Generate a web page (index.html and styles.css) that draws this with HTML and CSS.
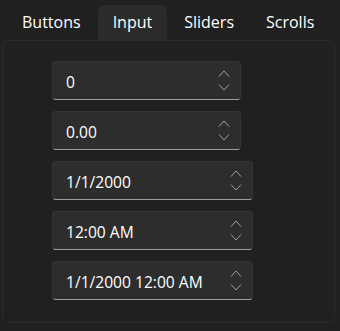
FILE: index.html
```html
<!DOCTYPE html>
<html lang="en">
<head>
    <meta charset="UTF-8">
    <meta name="viewport" content="width=device-width, initial-scale=1.0">
    <title>Input</title>
    <link rel="stylesheet" href="styles.css">
</head>
<body>
    <!-- Tab strip -->
    <div class="tabs">
        <div class="tab">Buttons</div>
        <div class="tab selected">Input</div>
        <div class="tab">Sliders</div>
        <div class="tab">Scrolls</div>
    </div>

    <!-- Input page -->
    <div class="panel">
        <div class="spin">
            <span class="value">0</span>
            <svg class="arrows" width="12" height="23" viewBox="0 0 12 23"><path d="M1 7.5 L6 2 L11 7.5 M1 15.5 L6 21 L11 15.5"/></svg>
        </div>
        <div class="spin">
            <span class="value">0.00</span>
            <svg class="arrows" width="12" height="23" viewBox="0 0 12 23"><path d="M1 7.5 L6 2 L11 7.5 M1 15.5 L6 21 L11 15.5"/></svg>
        </div>
        <div class="spin wide">
            <span class="value">1/1/2000</span>
            <svg class="arrows" width="12" height="23" viewBox="0 0 12 23"><path d="M1 7.5 L6 2 L11 7.5 M1 15.5 L6 21 L11 15.5"/></svg>
        </div>
        <div class="spin wide">
            <span class="value">12:00 AM</span>
            <svg class="arrows" width="12" height="23" viewBox="0 0 12 23"><path d="M1 7.5 L6 2 L11 7.5 M1 15.5 L6 21 L11 15.5"/></svg>
        </div>
        <div class="spin wide">
            <span class="value">1/1/2000 12:00 AM</span>
            <svg class="arrows" width="12" height="23" viewBox="0 0 12 23"><path d="M1 7.5 L6 2 L11 7.5 M1 15.5 L6 21 L11 15.5"/></svg>
        </div>
    </div>
</body>
</html>
```

FILE: styles.css
```css
body {
    margin: 0;
    background-color: #202020;
    color: #ffffff;
    font-family: "Open Sans", "Noto Sans", sans-serif;
    font-size: 16px;
}
.tabs {
    display: flex;
    gap: 2px;
    padding: 5px 0 0 7px;
}
.tab {
    height: 35px;
    line-height: 35px;
    padding: 0 15px;
    border-radius: 6px 6px 0 0;
}
.tab.selected {
    background-color: #2b2b2b;
}
.panel {
    margin: 0 5px 0 2px;
    padding: 20px 0 22px 49px;
    border: 1px solid #2c2c2c;
    border-radius: 7px;
    display: flex;
    flex-direction: column;
    gap: 11px;
}
.spin {
    box-sizing: border-box;
    width: 189px;
    height: 39px;
    display: flex;
    align-items: center;
    justify-content: space-between;
    padding: 0 10px 0 13px;
    background-color: #2d2d2d;
    border: 1px solid #353535;
    border-bottom-color: #9c9c9c;
    border-radius: 4px;
}
.spin.wide {
    width: 201px;
}
.value {
    font-size: 15.6px;
    padding-top: 2px;
}
.arrows {
    fill: none;
    stroke: #a0a0a0;
    stroke-width: 1;
}
```
